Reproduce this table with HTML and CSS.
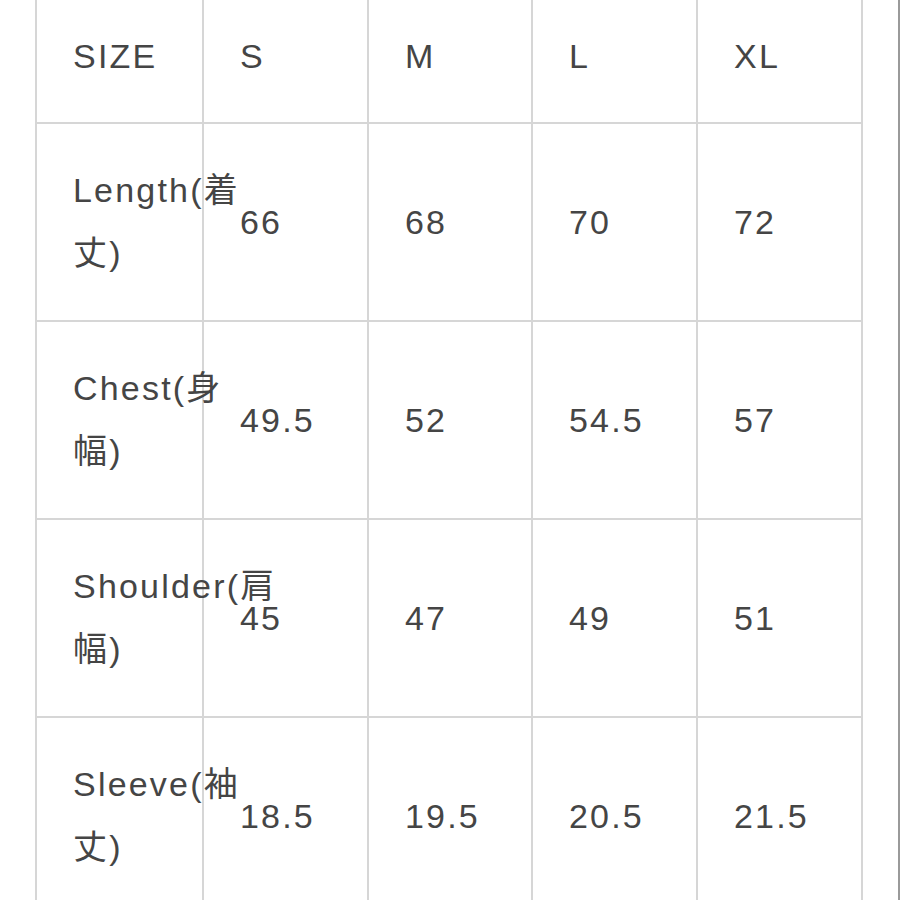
FILE: index.html
```html
<!DOCTYPE html>
<html lang="ja">
<head>
<meta charset="utf-8">
<link rel="stylesheet" href="styles.css">
</head>
<body>
<div class="page">
  <table class="size-table">
    <colgroup>
      <col class="c1"><col class="c2"><col class="c3"><col class="c4"><col class="c5">
    </colgroup>
    <tr class="head">
      <td>SIZE</td><td>S</td><td>M</td><td>L</td><td>XL</td>
    </tr>
    <tr class="row">
      <td class="label">Length(着丈)</td><td>66</td><td>68</td><td>70</td><td>72</td>
    </tr>
    <tr class="row">
      <td class="label">Chest(身幅)</td><td>49.5</td><td>52</td><td>54.5</td><td>57</td>
    </tr>
    <tr class="row">
      <td class="label">Shoulder(肩幅)</td><td>45</td><td>47</td><td>49</td><td>51</td>
    </tr>
    <tr class="row">
      <td class="label">Sleeve(袖丈)</td><td>18.5</td><td>19.5</td><td>20.5</td><td>21.5</td>
    </tr>
  </table>
</div>
</body>
</html>
```

FILE: styles.css
```css
html, body {
  margin: 0;
  padding: 0;
  background: #ffffff;
}

.page {
  width: 898px;
  height: 900px;
  overflow: hidden;
  border-right: 2px solid #9a9a9a;
  background: #ffffff;
}

.size-table {
  margin-left: 35px;
  border-collapse: collapse;
  table-layout: fixed;
  width: 826px;
  font-family: "Liberation Sans", "Noto Sans CJK JP", sans-serif;
  font-size: 34px;
  letter-spacing: 2.2px;
  color: #454545;
}

.size-table col.c1 { width: 167px; }
.size-table col.c2 { width: 165px; }
.size-table col.c3 { width: 164px; }
.size-table col.c4 { width: 165px; }
.size-table col.c5 { width: 165px; }

.size-table td {
  border: 2px solid #d6d6d6;
  padding: 0 0 0 36px;
  vertical-align: middle;
  line-height: 63px;
  white-space: normal;
  overflow: visible;
}

.size-table tr.head td {
  border-top: none;
  height: 112px;
  padding-bottom: 10px;
}

.size-table tr.row td {
  height: 196px;
}

.size-table td.label {
  word-break: normal;
}
```
